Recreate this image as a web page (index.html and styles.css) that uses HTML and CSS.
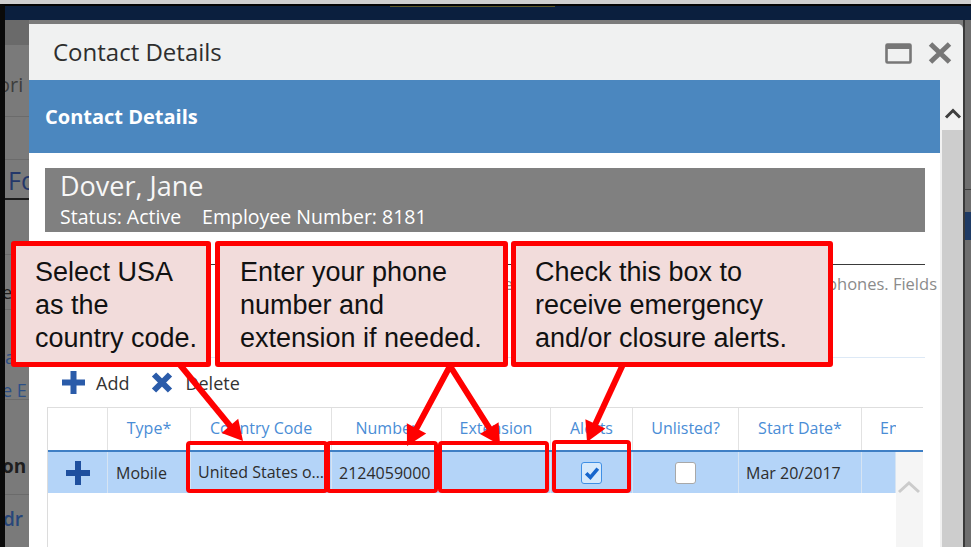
FILE: index.html
```html
<!DOCTYPE html>
<html lang="en">
<head>
<meta charset="utf-8">
<title>Contact Details</title>
<link rel="stylesheet" href="styles.css">
</head>
<body>
<div class="shot">
  <div class="frame">
    <header class="appbar"><span class="appbar-accent"></span></header>
    <div class="stage">
      <aside class="bg-left">
        <div class="bl bl-top"></div>
        <div class="bl bl-1"><span class="frag frag-ori">ori</span></div>
        <div class="bl bl-2"></div>
        <div class="bl bl-3"><span class="frag frag-fo">Fo</span></div>
        <div class="bl bl-4"></div>
        <div class="bl bl-5"><span class="frag frag-e">e</span></div>
        <div class="bl bl-6"><span class="frag frag-a">a</span><span class="frag frag-ee">e E</span></div>
        <div class="bl bl-7"><span class="frag frag-on">on</span></div>
        <div class="bl bl-8"><span class="frag frag-dr">dr</span></div>
      </aside>

      <section class="dialog">
        <div class="dlg-title">
          <h1>Contact Details</h1>
          <div class="win-btns">
            <svg class="ic-max" width="27" height="21" viewBox="0 0 27 21">
              <rect x="1.5" y="1.5" width="24" height="18" fill="none" stroke="#777" stroke-width="2.6" rx="1"/>
              <rect x="1.5" y="1.5" width="24" height="4.5" fill="#777"/>
            </svg>
            <svg class="ic-close" width="24" height="22" viewBox="0 0 24 22">
              <path d="M2.5 2 L21.5 20 M21.5 2 L2.5 20" stroke="#777" stroke-width="5"/>
            </svg>
          </div>
        </div>

        <div class="dlg-body">
          <div class="dlg-scroll">
            <div class="panel-head">Contact Details</div>
            <div class="panel">
              <div class="emp">
                <div class="emp-name">Dover, Jane</div>
                <div class="emp-meta"><span>Status: Active</span><span>Employee Number: 8181</span></div>
              </div>
              <div class="tabline"></div>
              <p class="intro">Add, change or remove your work, home and mobile phones. Fields</p>
              <div class="sep"></div>

              <div class="toolbar">
                <span class="tb-btn">
                  <svg width="23" height="23" viewBox="0 0 23 23"><path d="M8.5 0h6v23h-6z M0 8.5h23v6h-23z" fill="#2a5ba9"/></svg>
                  <span>Add</span>
                </span>
                <span class="tb-btn tb-del">
                  <svg width="22" height="21" viewBox="0 0 22 21"><path d="M3 2.5 L19 18.5 M19 2.5 L3 18.5" stroke="#2a5ba9" stroke-width="6"/></svg>
                  <span>Delete</span>
                </span>
              </div>

              <div class="grid">
                <div class="grid-head">
                  <div class="th"></div>
                  <div class="th">Type*</div>
                  <div class="th">Country Code</div>
                  <div class="th">Number</div>
                  <div class="th">Extension</div>
                  <div class="th">Alerts</div>
                  <div class="th">Unlisted?</div>
                  <div class="th">Start Date*</div>
                  <div class="th th-end"><span>End Date*</span></div>
                </div>
                <div class="grid-body">
                  <div class="rows">
                    <div class="row">
                      <div class="td td-icon">
                        <svg width="24" height="24" viewBox="0 0 24 24"><path d="M9 0h6v24h-6z M0 9h24v6h-24z" fill="#1f4f9e"/></svg>
                      </div>
                      <div class="td">Mobile</div>
                      <div class="td td-clip">United States of America</div>
                      <div class="td">2124059000</div>
                      <div class="td"></div>
                      <div class="td td-center"><span class="chk chk-on">
                        <svg width="18" height="18" viewBox="0 0 18 18"><path d="M3.2 9.2 L7.4 13.4 L14.8 4.6" fill="none" stroke="#1766cc" stroke-width="3.6"/></svg>
                      </span></div>
                      <div class="td td-center"><span class="chk"></span></div>
                      <div class="td">Mar 20/2017</div>
                      <div class="td"></div>
                    </div>
                  </div>
                  <div class="tbl-scroll">
                    <svg width="26" height="14" viewBox="0 0 26 14"><path d="M3 12 L13 3 L23 12" fill="none" stroke="#cbcbcb" stroke-width="3"/></svg>
                  </div>
                </div>
              </div>
            </div>
          </div>
          <div class="vscroll">
            <div class="vs-up">
              <svg width="18" height="12" viewBox="0 0 18 12"><path d="M2 10.5 L9 3.5 L16 10.5" fill="none" stroke="#3e3e3e" stroke-width="3"/></svg>
            </div>
            <div class="vs-thumb"></div>
          </div>
        </div>
      </section>

      <aside class="bg-right">
        <div class="br br-1"></div>
        <div class="br br-2"></div>
        <div class="br br-3"></div>
      </aside>
    </div>
  </div>

  <!-- pointers from the help notes to the fields they describe -->
  <svg class="marks" width="971" height="547" viewBox="0 0 971 547">
    <g fill="none" stroke="#ff0000" stroke-width="4">
      <rect x="188" y="443" width="138" height="48" rx="2"/>
      <rect x="328" y="443" width="108" height="48" rx="2"/>
      <rect x="440" y="443" width="107" height="48" rx="2"/>
      <rect x="554" y="442" width="75" height="49" rx="2"/>
    </g>
    <g fill="none" stroke="#ff0000" stroke-width="6" stroke-linejoin="miter">
      <path d="M176 360 L233.2 429.7"/>
      <path d="M414.1 432.8 L450 366 L492 432.3"/>
      <path d="M625 360 L593.3 428.4"/>
    </g>
    <g fill="#ff0000">
      <polygon points="243,441 221.6,433.1 238.2,418.7"/>
      <polygon points="407,446 406.8,423.2 426.2,433.6"/>
      <polygon points="500,445 480,434 498.6,422.2"/>
      <polygon points="587,442 585.4,419.2 605.4,428.4"/>
    </g>
  </svg>

  <div class="note note-1">Select USA<br>as the<br>country code.</div>
  <div class="note note-2">Enter your phone<br>number and<br>extension if needed.</div>
  <div class="note note-3">Check this box to<br>receive emergency<br>and/or closure alerts.</div>
</div>
</body>
</html>
```

FILE: styles.css
```css
* { box-sizing: border-box; }

html, body { margin: 0; padding: 0; }

body {
  width: 971px;
  height: 547px;
  overflow: hidden;
  background: #cfcfcf;
  font-family: "Open Sans", "Noto Sans", sans-serif;
}

.shot {
  position: relative;
  width: 971px;
  height: 547px;
  padding-top: 4px;
}

.frame {
  height: 543px;
  border-top: 2px solid #050505;
  border-left: 5px solid #0a0a0a;
  display: flex;
  flex-direction: column;
}

/* application bar behind the modal */
.appbar {
  flex: none;
  height: 14px;
  background: #0b1f3e;
}
.appbar-accent {
  display: block;
  margin-left: 385px;
  width: 165px;
  height: 1px;
  background: #5e5a28;
}

.stage {
  flex: 1;
  min-height: 0;
  display: flex;
  background: #7b7b7b;
}

/* dimmed page content left of the dialog */
.bg-left {
  width: 24px;
  flex: none;
  overflow: hidden;
  display: flex;
  flex-direction: column;
  background: #7a7a7a;
  white-space: nowrap;
}
.bl { flex: none; border-bottom: 1px solid #6b6b6b; }
.bl-top { height: 25px; background: #6a6a6a; border-bottom: none; }
.bl-1 { height: 72px; padding-top: 28px; }
.bl-2 { height: 43px; }
.bl-3 { height: 40px; padding-top: 5px; border-bottom: 2px solid #1c1c1c; }
.bl-4 { height: 55px; }
.bl-5 { height: 55px; padding-top: 25px; }
.bl-6 { height: 90px; padding-top: 35px; display: flex; flex-direction: column; }
.bl-7 { height: 95px; padding-top: 54px; }
.bl-8 { height: 60px; padding-top: 12px; border-bottom: none; }

.frag { display: block; line-height: 24px; }
.frag-ori { font-size: 20px; color: #3d3d3d; margin-left: -7px; }
.frag-fo { font-size: 25px; line-height: 30px; color: #24376a; margin-left: 3px; }
.frag-e { font-size: 18px; color: #1f1f1f; margin-left: -3px; }
.frag-a { font-size: 18px; color: #2c4f86; margin-left: 0; }
.frag-ee { font-size: 18px; color: #2c4f86; margin-left: -3px; margin-top: 9px; }
.frag-on { font-size: 19px; font-weight: 700; color: #1e1e1e; margin-left: -3px; }
.frag-dr { font-size: 19px; font-weight: 600; color: #27467a; margin-left: -2px; }

.bg-right {
  flex: 1;
  display: flex;
  flex-direction: column;
  background: #6f6f6f;
  border-left: 2px solid #3a3a3a;
}
.br-1 { height: 170px; border-bottom: 1px solid #3f3f3f; }
.br-2 { height: 22px; }
.br-3 { height: 28px; background: #1f3b65; }

/* dialog */
.dialog {
  width: 934px;
  flex: none;
  margin-top: 4px;
  background: #f0f1f1;
  border-top-right-radius: 5px;
  display: flex;
  flex-direction: column;
  overflow: hidden;
}

.dlg-title {
  flex: none;
  height: 56px;
  display: flex;
  align-items: center;
  padding: 0 11px 0 24px;
}
.dlg-title h1 {
  flex: 1;
  margin: 0 0 2px;
  font-size: 24px;
  font-weight: 400;
  color: #2e2e2e;
}
.win-btns {
  display: flex;
  align-items: center;
  gap: 16px;
  padding-top: 2px;
}
.win-btns svg { display: block; }

.dlg-body {
  flex: 1;
  min-height: 0;
  display: flex;
}
.dlg-scroll {
  width: 911px;
  flex: none;
  background: #ffffff;
  overflow: hidden;
}

.vscroll {
  flex: 1;
  display: flex;
  flex-direction: column;
  background: #f1f1f1;
}
.vs-up {
  height: 50px;
  padding: 27px 0 0 4px;
}
.vs-up svg { display: block; }
.vs-thumb {
  flex: 1;
  margin-left: 2px;
  background: #cdcdcd;
}

.panel-head {
  height: 73px;
  padding-left: 16px;
  display: flex;
  align-items: center;
  background: #4b87bf;
  color: #ffffff;
  font-size: 20px;
  font-weight: 700;
}

.panel {
  padding: 15px 15px 0 16px;
}

.emp {
  height: 64px;
  padding: 2.5px 15px 0;
  background: #808080;
  color: #ffffff;
}
.emp-name {
  font-size: 27px;
  line-height: 30px;
  color: #f7f7f7;
}
.emp-meta {
  display: flex;
  gap: 21px;
  margin-top: 5px;
  font-size: 19.5px;
  line-height: 22px;
}

.tabline {
  margin-top: 32px;
  height: 1px;
  background: #3a3a3a;
}

.intro {
  margin: 8px -12px 0 0;
  height: 84px;
  font-size: 16.5px;
  line-height: 22px;
  color: #8b8b8b;
  text-align: right;
  white-space: nowrap;
}

.sep {
  height: 1px;
  background: #dde9f6;
}

.toolbar {
  height: 49px;
  display: flex;
  align-items: center;
  padding-left: 17px;
  font-size: 18px;
  color: #333333;
}
.tb-btn {
  display: flex;
  align-items: center;
  gap: 11px;
}
.tb-btn svg { display: block; }
.tb-del {
  margin-left: 22px;
  gap: 12px;
}

/* phone grid */
.grid {
  margin-left: 2px;
  width: 876px;
  border-left: 1px solid #dcdcdc;
}
.grid-head {
  display: grid;
  grid-template-columns: 60px 83px 141px 110px 109px 82px 106px 123px 61px;
  height: 45px;
  border-top: 1px solid #dedede;
  border-bottom: 2px solid #3f7fc5;
}
.th {
  display: flex;
  align-items: center;
  justify-content: center;
  padding-bottom: 2px;
  border-right: 1px solid #e2e2e2;
  font-size: 16px;
  color: #4a8dd6;
  white-space: nowrap;
}
.th-end {
  justify-content: flex-start;
  border-right: none;
}
.th-end span {
  display: block;
  width: 34px;
  padding-left: 18px;
  overflow: hidden;
}

.grid-body {
  display: flex;
  height: 100px;
}
.rows { width: 848px; flex: none; }
.row {
  display: grid;
  grid-template-columns: 60px 83px 141px 110px 109px 82px 106px 123px 34px;
  height: 41px;
  background: #b4d4f8;
}
.td {
  display: flex;
  align-items: center;
  padding-left: 7px;
  border-right: 1px solid #d6e4f3;
  font-size: 16px;
  color: #2d2d2d;
  white-space: nowrap;
  overflow: hidden;
}
.row .td:nth-child(2) { padding-left: 8px; }
.td-clip {
  display: block;
  line-height: 40px;
  text-overflow: ellipsis;
  padding-right: 4px;
}
.td-icon, .td-center {
  justify-content: center;
  padding-left: 0;
}
.td-icon svg { display: block; }

.chk {
  width: 21px;
  height: 22px;
  border: 1.5px solid #a8a8a8;
  border-radius: 3px;
  background: #ffffff;
  display: flex;
  align-items: center;
  justify-content: center;
}
.chk-on {
  border-color: #3f8fe5;
  background: #d6e9fc;
}
.chk svg { display: block; }

.tbl-scroll {
  flex: 1;
  background: #f5f5f5;
  padding-top: 28px;
}
.tbl-scroll svg { display: block; }

/* help notes */
.marks {
  position: absolute;
  left: 0;
  top: 0;
  pointer-events: none;
}

.note {
  position: absolute;
  top: 241px;
  height: 126px;
  padding: 10px 0 0 19px;
  border: 5px solid #ff0000;
  border-radius: 3px;
  background: #f2dcdb;
  font-family: "Liberation Sans", Arial, sans-serif;
  font-size: 27px;
  line-height: 33px;
  color: #111111;
  white-space: nowrap;
}
.note-1 { left: 11px; width: 200px; }
.note-2 { left: 215px; width: 293px; padding-left: 20px; }
.note-3 { left: 511px; width: 322px; }
```
